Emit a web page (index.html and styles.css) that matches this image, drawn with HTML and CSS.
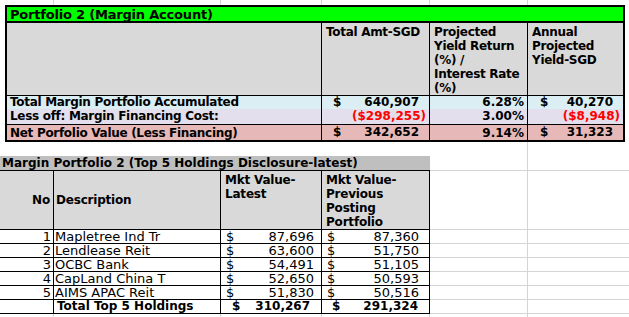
FILE: index.html
```html
<!DOCTYPE html>
<html lang="en">
<head>
    <meta charset="UTF-8">
    <title>Portfolio 2 (Margin Account)</title>
    <link rel="stylesheet" href="styles.css">
</head>
<body>
    <div class="sheet">
        <!-- gridline stub above the summary box -->
        <div class="strip">
            <div class="gl"></div><div class="gl"></div><div class="gl"></div><div class="gl"></div><div class="gl"></div><div></div>
        </div>

        <div class="summary">
            <div class="s-title">Portfolio 2 (Margin Account)</div>

            <div class="s-head"></div>
            <div class="s-head">Total Amt-SGD</div>
            <div class="s-head">Projected<br>Yield Return<br>(%) /<br>Interest Rate<br>(%)</div>
            <div class="s-head last">Annual<br>Projected<br>Yield-SGD</div>

            <div class="s-cell blue label">Total Margin Portfolio Accumulated</div>
            <div class="s-cell blue money col-d"><span>$</span><span class="pos">640,907</span></div>
            <div class="s-cell blue pct">6.28%</div>
            <div class="s-cell blue money col-f last"><span>$</span><span class="pos">40,270</span></div>

            <div class="s-cell lilac label">Less off: Margin Financing Cost:</div>
            <div class="s-cell lilac money col-d"><span></span><span class="neg">($298,255)</span></div>
            <div class="s-cell lilac pct">3.00%</div>
            <div class="s-cell lilac money col-f last"><span></span><span class="neg">($8,948)</span></div>

            <div class="s-cell pink label">Net Porfolio Value (Less Financing)</div>
            <div class="s-cell pink money col-d"><span>$</span><span class="pos">342,652</span></div>
            <div class="s-cell pink pct">9.14%</div>
            <div class="s-cell pink money col-f last"><span>$</span><span class="pos">31,323</span></div>
        </div>

        <div class="holdings">
            <!-- spacer row -->
            <div></div><div></div><div></div><div></div><div class="gl"></div><div></div>

            <div class="h-title">Margin Portfolio 2 (Top 5 Holdings Disclosure-latest)</div>
            <div class="gl gb"></div><div class="gb"></div>

            <div class="h-head no">No</div>
            <div class="h-head desc">Description</div>
            <div class="h-head">Mkt Value-<br>Latest</div>
            <div class="h-head">Mkt Value-<br>Previous<br>Posting<br>Portfolio</div>
            <div class="gl gb"></div><div class="gb"></div>

            <div class="h-cell no">1</div>
            <div class="h-cell">Mapletree Ind Tr</div>
            <div class="h-cell money col-c"><span>$</span><span>87,696</span></div>
            <div class="h-cell money col-p"><span>$</span><span>87,360</span></div>
            <div class="gl gb"></div><div class="gb"></div>

            <div class="h-cell no">2</div>
            <div class="h-cell">Lendlease Reit</div>
            <div class="h-cell money col-c"><span>$</span><span>63,600</span></div>
            <div class="h-cell money col-p"><span>$</span><span>51,750</span></div>
            <div class="gl gb"></div><div class="gb"></div>

            <div class="h-cell no">3</div>
            <div class="h-cell">OCBC Bank</div>
            <div class="h-cell money col-c"><span>$</span><span>54,491</span></div>
            <div class="h-cell money col-p"><span>$</span><span>51,105</span></div>
            <div class="gl gb"></div><div class="gb"></div>

            <div class="h-cell no">4</div>
            <div class="h-cell">CapLand China T</div>
            <div class="h-cell money col-c"><span>$</span><span>52,650</span></div>
            <div class="h-cell money col-p"><span>$</span><span>50,593</span></div>
            <div class="gl gb"></div><div class="gb"></div>

            <div class="h-cell no">5</div>
            <div class="h-cell">AIMS APAC Reit</div>
            <div class="h-cell money col-c"><span>$</span><span>51,830</span></div>
            <div class="h-cell money col-p"><span>$</span><span>50,516</span></div>
            <div class="gl gb"></div><div class="gb"></div>

            <div class="h-cell"></div>
            <div class="h-cell total">Total Top 5 Holdings</div>
            <div class="h-cell money total tot-c"><span>$</span><span>310,267</span></div>
            <div class="h-cell money total tot-p"><span>$</span><span>291,324</span></div>
            <div class="gl gb"></div><div class="gb"></div>

            <!-- gridline stubs below -->
            <div class="gl"></div><div class="gl"></div><div class="gl"></div><div class="gl"></div><div class="gl"></div><div></div>
        </div>
    </div>
</body>
</html>
```

FILE: styles.css
```css
* {
    box-sizing: border-box;
}
body {
    margin: 0;
    background: #fff;
    font-family: "DejaVu Sans", Verdana, sans-serif;
    font-size: 13px;
    color: #000;
}
.sheet {
    width: 629px;
    height: 317px;
    overflow: hidden;
}

/* light excel gridlines */
.gl {
    border-right: 1px solid #d4d4d4;
}
.gb {
    border-bottom: 1px solid #d4d4d4;
}
.strip {
    display: grid;
    grid-template-columns: 54px 167px 101px 108px 98px 1fr;
    height: 5px;
}

/* summary box */
.summary {
    margin-left: 5px;
    width: 620px;
    border: 2px solid #000;
    display: grid;
    grid-template-columns: 315px 108px 98px 95px;
    grid-template-rows: 16px 73px 13px 16px 15px;
    font-weight: bold;
    font-size: 12px;
}
.summary > div {
    border-right: 1px solid #000;
    overflow: hidden;
    white-space: nowrap;
}
.summary > div.last,
.summary > div.s-title {
    border-right: none;
}
.s-title {
    grid-column: 1 / 5;
    background: #00ff00;
    border-bottom: 2px solid #000;
    padding: 1px 0 0 3px;
    font-size: 13px;
    letter-spacing: -0.2px;
    line-height: 14px;
}
.s-head {
    background: #d9d9d9;
    border-bottom: 1px solid #000;
    line-height: 14px;
    letter-spacing: -0.3px;
    padding: 2px 0 0 4px;
}
.s-cell {
    line-height: 13px;
}
.blue { background: #daeef3; }
.lilac { background: #e4dfec; border-bottom: 1px solid #000; line-height: 15px; }
.pink { background: #e6b8b7; line-height: 15px; padding-top: 1px; }
.label {
    padding-left: 3px;
    letter-spacing: -0.3px;
}
.pct {
    text-align: right;
    padding-right: 3px;
}
.money {
    display: flex;
    justify-content: space-between;
}
.money .neg {
    color: #ff0000;
}
.col-d { padding: 0 3px 0 11px; }
.col-f { padding: 0 3px 0 12px; }
.summary .pos {
    padding-right: 7px;
}

/* holdings table */
.holdings {
    display: grid;
    grid-template-columns: 54px 167px 101px 108px 98px 1fr;
    grid-template-rows: 14px 15px 59px repeat(6, 14px) 3px;
}
.holdings > div {
    overflow: hidden;
    white-space: nowrap;
}
.h-title {
    grid-column: 1 / 5;
    background: #bfbfbf;
    border-bottom: 1px solid #000;
    font-weight: bold;
    font-size: 12px;
    line-height: 14px;
    padding-left: 2px;
}
.h-head {
    background: #d9d9d9;
    font-weight: bold;
    font-size: 12px;
    letter-spacing: -0.2px;
    line-height: 14px;
    padding: 2px 0 0 4px;
    border-right: 1px solid #000;
    border-bottom: 1px solid #000;
}
.h-head.no,
.h-head.desc {
    display: flex;
    align-items: center;
    padding-top: 0;
}
.h-head.no {
    justify-content: flex-end;
    padding: 0 3px 0 0;
}
.h-head.desc {
    padding-left: 2px;
}
.h-cell {
    line-height: 13px;
    padding-left: 1px;
    border-right: 1px solid #000;
    border-bottom: 1px solid #000;
}
.h-cell.no {
    text-align: right;
    padding: 0 2px 0 0;
}
.h-cell.money {
    display: flex;
    justify-content: space-between;
}
.col-c { padding: 0 7px 0 5px; }
.col-p { padding: 0 10px 0 5px; }
.total {
    font-weight: bold;
    font-size: 12px;
}
.h-cell.total {
    padding-left: 3px;
}
.h-cell.tot-c { padding: 0 11px 0 11px; }
.h-cell.tot-p { padding: 0 11px 0 10px; }
```
